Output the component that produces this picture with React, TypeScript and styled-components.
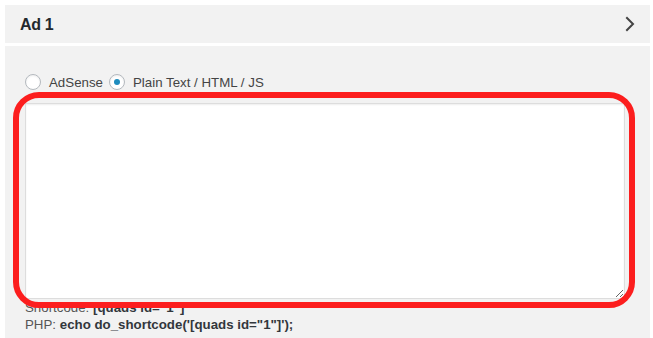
import React, { useState } from 'react';
import styled, { createGlobalStyle } from 'styled-components';

const GlobalStyle = createGlobalStyle`
  body {
    margin: 0;
    background: #ffffff;
    font-family: "Liberation Sans", Arial, sans-serif;
  }
`;

const AdPanel = styled.div`
  margin: 5px 0 0 5px;
  width: 645px;
  display: flex;
  flex-direction: column;
  row-gap: 3px;
`;

const PanelHeader = styled.div`
  height: 38px;
  background: #f2f2f2;
  display: flex;
  align-items: center;
  justify-content: space-between;
  padding: 0 8px 0 15px;
  box-sizing: border-box;
`;

const HeaderTitle = styled.span`
  font-size: 16px;
  font-weight: 700;
  color: #23282d;
  letter-spacing: -0.3px;
  padding-top: 1px;
`;

const PanelBody = styled.div`
  position: relative;
  background: #f2f2f2;
  padding: 28px 0 20px 20px;
  min-height: 300px;
  box-sizing: border-box;
`;

const RadioRow = styled.div`
  display: flex;
  align-items: center;
  height: 16px;
  margin-bottom: 13px;
`;

const RadioLabel = styled.label`
  display: flex;
  align-items: center;
  column-gap: 8px;
  margin-right: 6px;
  font-size: 13.3px;
  color: #444444;
  cursor: pointer;
`;

const RadioDot = styled.span<{ $checked: boolean }>`
  width: 16px;
  height: 16px;
  box-sizing: border-box;
  border-radius: 50%;
  border: 1px solid #b4b9be;
  background: #ffffff;
  box-shadow: inset 0 1px 2px rgba(0, 0, 0, 0.07);
  display: flex;
  align-items: center;
  justify-content: center;
  &::after {
    content: '';
    width: 6px;
    height: 6px;
    border-radius: 50%;
    background: #1e8cbe;
    display: ${(p) => (p.$checked ? 'block' : 'none')};
  }
`;

const CodeArea = styled.textarea`
  display: block;
  width: 600px;
  height: 196px;
  box-sizing: border-box;
  border: 1px solid #dddddd;
  box-shadow: inset 0 1px 2px rgba(0, 0, 0, 0.07);
  background: #ffffff;
  margin: 0;
  resize: vertical;
  outline: none;
`;

const InfoLine = styled.div`
  font-size: 13.3px;
  line-height: 17px;
  color: #555555;
  b {
    color: #32373c;
    font-weight: 700;
  }
`;

const Highlight = styled.div`
  position: absolute;
  left: 8px;
  top: 46px;
  width: 622px;
  height: 216px;
  box-sizing: border-box;
  border: 6px solid #fc1e1e;
  border-radius: 26px;
  pointer-events: none;
`;

const Chevron = () => (
  <svg width="24" height="24" viewBox="0 0 24 24" fill="none">
    <path d="M9 6l6 6-6 6" stroke="#444444" strokeWidth="2" strokeLinecap="square" />
  </svg>
);

const App = () => {
  const [adType, setAdType] = useState<'adsense' | 'plain'>('plain');

  return (
    <>
      <GlobalStyle />
      <AdPanel>
        <PanelHeader>
          <HeaderTitle>Ad 1</HeaderTitle>
          <Chevron />
        </PanelHeader>
        <PanelBody>
          <RadioRow>
            <RadioLabel onClick={() => setAdType('adsense')}>
              <RadioDot $checked={adType === 'adsense'} />
              AdSense
            </RadioLabel>
            <RadioLabel onClick={() => setAdType('plain')}>
              <RadioDot $checked={adType === 'plain'} />
              Plain Text / HTML / JS
            </RadioLabel>
          </RadioRow>
          <CodeArea />
          <InfoLine>
            Shortcode: <b>[quads id="1"]</b>
          </InfoLine>
          <InfoLine>
            PHP: <b>echo do_shortcode('[quads id="1"]');</b>
          </InfoLine>
          <Highlight />
        </PanelBody>
      </AdPanel>
    </>
  );
};

export default App;
